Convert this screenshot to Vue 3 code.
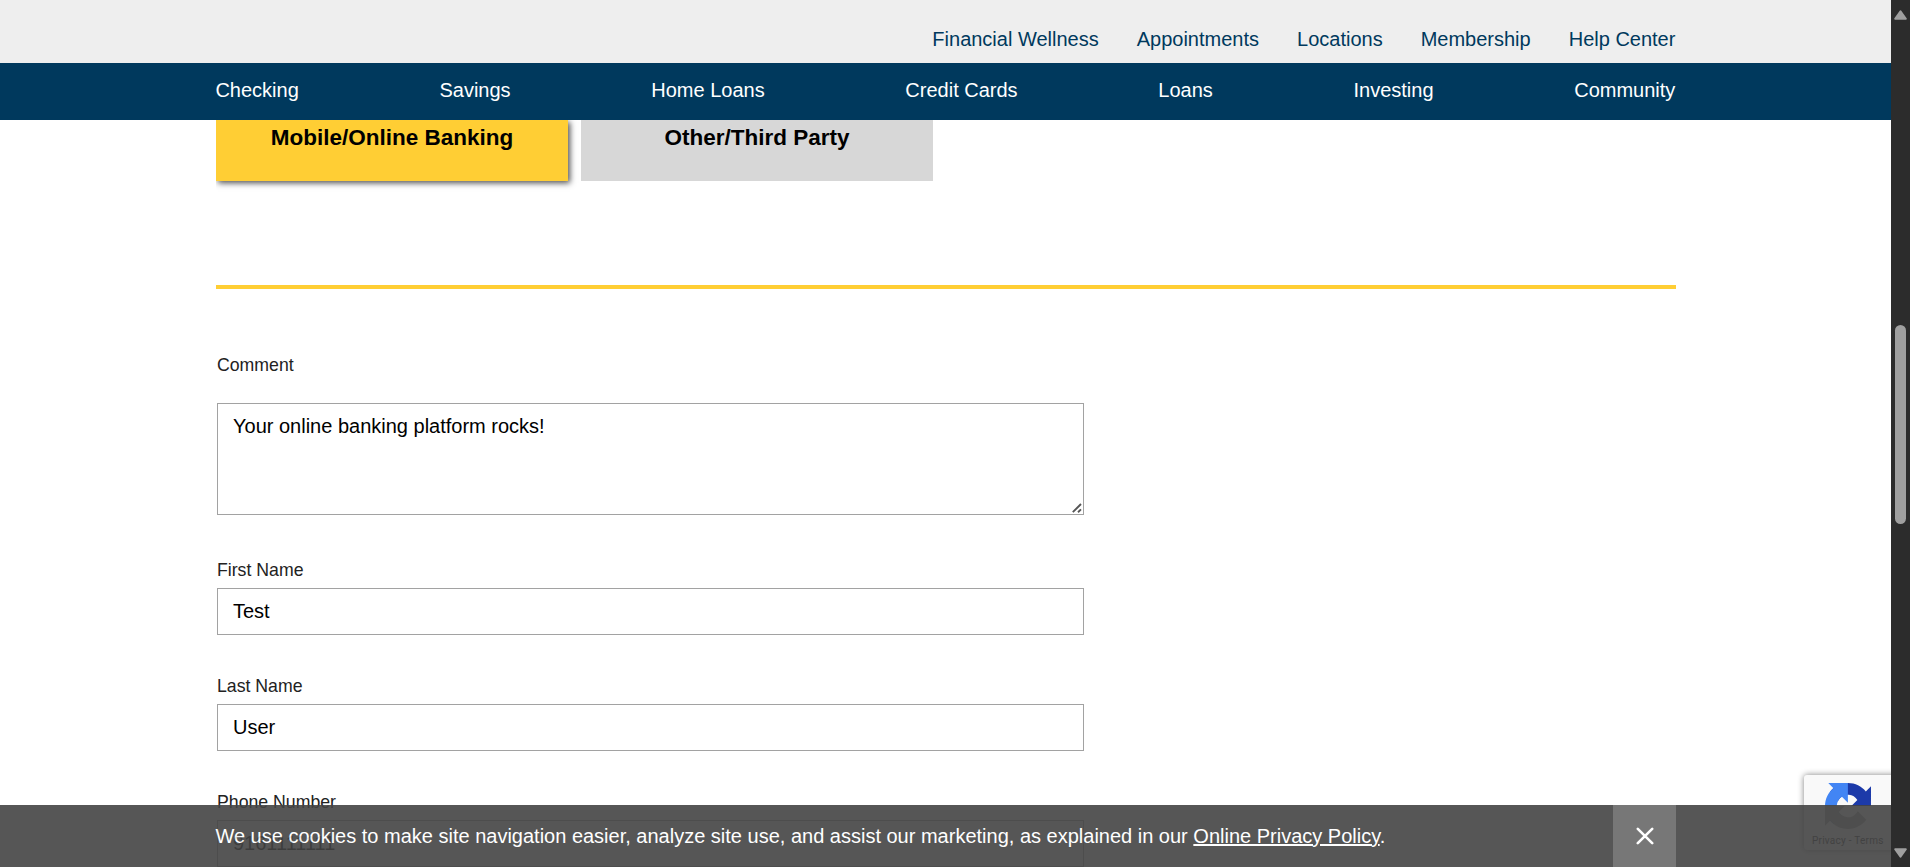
<script setup>
const topLinks = ['Financial Wellness', 'Appointments', 'Locations', 'Membership', 'Help Center']
const mainLinks = ['Checking', 'Savings', 'Home Loans', 'Credit Cards', 'Loans', 'Investing', 'Community']
const fields = [
  { label: 'First Name', value: 'Test' },
  { label: 'Last Name', value: 'User' },
  { label: 'Phone Number', value: '9161111111' },
]
</script>

<template>
  <div class="screen">
    <div class="page">
      <header>
        <nav class="top-nav">
          <a v-for="l in topLinks" :key="l">{{ l }}</a>
        </nav>
        <nav class="main-nav">
          <a v-for="l in mainLinks" :key="l">{{ l }}</a>
        </nav>
      </header>

      <main>
        <div class="tabs">
          <div class="tab active">Mobile/Online Banking</div>
          <div class="tab">Other/Third Party</div>
        </div>
        <div class="rule"></div>
        <form class="form">
          <div class="label comment-label">Comment</div>
          <div class="box comment" role="textbox">
            Your online banking platform rocks!
            <svg class="grip" width="10" height="10" viewBox="0 0 10 10">
              <path d="M.8 9.2 9 1M6 9.2 9 6.4" stroke="#555" stroke-width="1.9" fill="none" />
            </svg>
          </div>
          <div v-for="f in fields" :key="f.label" class="field">
            <div class="label">{{ f.label }}</div>
            <div class="box input" role="textbox">{{ f.value }}</div>
          </div>
        </form>
      </main>

      <div class="captcha">
        <svg width="46" height="46" viewBox="0 0 64 64">
          <path fill="#1c3aa9" d="M64 31.955l-.033-1.37V4.687l-7.16 7.16C50.948 4.674 42.033.093 32.05.093c-10.4 0-19.622 4.96-25.458 12.64l11.736 11.86a15.55 15.55 0 0 1 4.754-5.334c2.05-1.6 4.952-2.906 8.968-2.906.485 0 .86.057 1.135.163 4.976.393 9.288 3.14 11.828 7.124l-8.307 8.307L64 31.953" />
          <path fill="#4285f4" d="M31.862.094l-1.37.033H4.594l7.16 7.16C4.58 13.147 0 22.06 0 32.046c0 10.4 4.96 19.622 12.64 25.458L24.5 45.768a15.55 15.55 0 0 1-5.334-4.754c-1.6-2.05-2.906-4.952-2.906-8.968 0-.485.057-.86.163-1.135.393-4.976 3.14-9.288 7.124-11.828l8.307 8.307L31.86.095" />
          <path fill="#ababab" d="M.001 32.045l.033 1.37v25.898l7.16-7.16c5.86 7.173 14.774 11.754 24.76 11.754 10.4 0 19.622-4.96 25.458-12.64l-11.736-11.86a15.55 15.55 0 0 1-4.754 5.334c-2.05 1.6-4.952 2.906-8.968 2.906-.485 0-.86-.057-1.135-.163-4.976-.393-9.288-3.14-11.828-7.124l8.307-8.307c-10.522.04-22.4.066-27.295-.005" />
        </svg>
        <span>Privacy - Terms</span>
      </div>

      <div class="cookies">
        <p>We use cookies to make site navigation easier, analyze site use, and assist our marketing, as explained in our <a>Online Privacy Policy</a>.</p>
        <div class="close">
          <svg width="18" height="18" viewBox="0 0 18 18">
            <path d="M1.8 1.8 16.2 16.2M16.2 1.8 1.8 16.2" stroke="#fff" stroke-width="2.6" stroke-linecap="round" />
          </svg>
        </div>
      </div>
    </div>

    <div class="scrollbar">
      <svg width="13" height="10" viewBox="0 0 13 10">
        <path d="M6.5 1.2 11.8 8.8H1.2Z" fill="#9f9f9f" stroke="#9f9f9f" stroke-width="2" stroke-linejoin="round" />
      </svg>
      <div class="thumb"></div>
      <svg width="13" height="10" viewBox="0 0 13 10">
        <path d="M6.5 8.8 11.8 1.2H1.2Z" fill="#9f9f9f" stroke="#9f9f9f" stroke-width="2" stroke-linejoin="round" />
      </svg>
    </div>
  </div>
</template>

<style>
body {
  margin: 0;
  overflow: hidden;
}
</style>

<style scoped>
.screen {
  display: flex;
  width: 1910px;
  height: 867px;
  overflow: hidden;
  font-family: "Liberation Sans", Arial, sans-serif;
  font-size: 20px;
  line-height: 24px;
  background: #fff;
}
.page {
  position: relative;
  width: 1891px;
  height: 867px;
  overflow: hidden;
}
.top-nav,
.main-nav {
  display: flex;
  box-sizing: border-box;
  padding: 0 215.6px 0 215.4px;
}
.top-nav {
  height: 63px;
  padding-top: 27px;
  justify-content: flex-end;
  gap: 38px;
  background: #eee;
  color: #00395d;
}
.main-nav {
  height: 57px;
  padding-top: 15px;
  justify-content: space-between;
  background: #00395d;
  color: #fff;
}
main {
  padding: 0 215px 0 216px;
}
.tabs {
  display: flex;
  gap: 13px;
  height: 61px;
}
.tab {
  width: 352px;
  box-sizing: border-box;
  padding-top: 3px;
  text-align: center;
  font-size: 22.5px;
  line-height: 29px;
  font-weight: bold;
  color: #000;
  background: #d7d7d7;
}
.tab.active {
  background: #ffce34;
  box-shadow: 2px 2px 6px rgba(0, 0, 0, 0.7);
  clip-path: inset(0 -12px -12px 0);
}
.rule {
  height: 4px;
  margin-top: 104px;
  background: #ffce34;
}
.form {
  width: 867px;
  padding: 64px 0 0 1px;
}
.label {
  font-size: 17.7px;
  line-height: 24px;
  color: #222;
}
.box {
  box-sizing: border-box;
  border: 1px solid #a2a2a2;
  padding: 10px 15px;
  color: #000;
}
.comment-label {
  margin-bottom: 26px;
}
.comment {
  position: relative;
  height: 112px;
  margin-bottom: 43px;
}
.grip {
  position: absolute;
  right: 1px;
  bottom: 1px;
}
.field .label {
  margin-bottom: 6px;
}
.input {
  height: 47px;
}
.field {
  margin-bottom: 39px;
}
.captcha {
  position: absolute;
  left: 1804px;
  top: 775px;
  width: 320px;
  height: 75px;
  box-sizing: border-box;
  padding: 8px 0 0 8px;
  display: flex;
  flex-direction: column;
  background: #f9f9f9;
  border-radius: 3px;
  box-shadow: 0 0 6px gray;
}
.captcha svg {
  margin-left: 13px;
}
.captcha span {
  font: 10px/14px Roboto, sans-serif;
  letter-spacing: 0.24px;
  margin-top: 5px;
  color: #333;
}
.cookies {
  position: absolute;
  left: 0;
  right: 0;
  bottom: 0;
  height: 62px;
  box-sizing: border-box;
  padding: 0 215px 0 215.4px;
  display: flex;
  justify-content: space-between;
  background: #444;
  color: #fff;
  opacity: 0.9;
}
.cookies p {
  margin: 19px 0 0;
  white-space: nowrap;
}
.cookies a {
  text-decoration: underline;
  text-decoration-thickness: 2px;
}
.close {
  width: 63px;
  display: flex;
  align-items: center;
  justify-content: center;
  background: #696969;
}
.scrollbar {
  width: 19px;
  box-sizing: border-box;
  padding: 10px 0 9px;
  display: flex;
  flex-direction: column;
  align-items: center;
  background: #2c2c2c;
}
.thumb {
  width: 11px;
  height: 199px;
  margin: 305px 0 324px;
  border-radius: 6px;
  background: #9f9f9f;
}
</style>
